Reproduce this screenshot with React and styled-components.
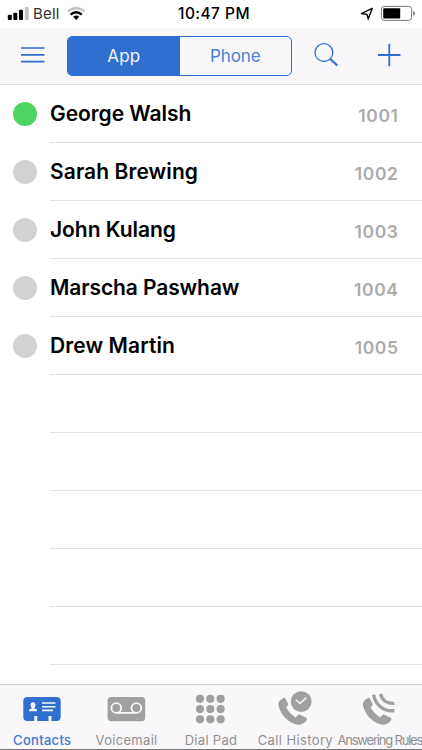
import React from 'react';
import styled, { createGlobalStyle } from 'styled-components';

const BLUE = '#2f6fd0';
const GRAY = '#a0a0a0';

const GlobalStyle = createGlobalStyle`
  * { box-sizing: border-box; }
  body { margin: 0; background: #fff; }
`;

const Screen = styled.div`
  width: 422px;
  height: 750px;
  overflow: hidden;
  display: flex;
  flex-direction: column;
  background: #fff;
  font-family: Inter, Roboto, 'Liberation Sans', sans-serif;
  color: #000;
  border-bottom: 1px solid #77777a;
`;

const StatusBar = styled.div`
  height: 28px;
  flex: none;
  display: grid;
  grid-template-columns: 178px 72px 1fr;
  align-items: center;
`;

const StatusSide = styled.div`
  display: flex;
  align-items: center;
  justify-content: ${(p) => (p.$end ? 'flex-end' : 'flex-start')};
  padding: ${(p) => (p.$end ? '0 6px 0 0' : '0 0 0 7px')};
`;

const Carrier = styled.span`
  width: 28px;
  margin: 0 5px 0 3px;
  font-size: 15px;
  line-height: 28px;
  letter-spacing: 0.2px;
  color: #333;
  white-space: nowrap;
`;

const Clock = styled.span`
  font-size: 15.5px;
  font-weight: 500;
  line-height: 28px;
  letter-spacing: 0.45px;
  white-space: nowrap;
`;

const Icon = styled.svg`
  display: block;
  flex: none;
`;

const NavBar = styled.div`
  height: 57px;
  flex: none;
  display: flex;
  align-items: center;
  padding: 0 18px 0 17px;
  background: #f9f7f9;
  border-bottom: 1px solid #dcdbdd;
`;

const IconButton = styled.button`
  width: 32px;
  height: 32px;
  padding: 0;
  border: 0;
  background: none;
  color: ${BLUE};
  margin-left: ${(p) => p.$gap || 0}px;
`;

const Segmented = styled.div`
  width: 225px;
  height: 40px;
  margin: 0 0 0 18px;
  display: flex;
  border: 1px solid ${BLUE};
  border-radius: 5px;
  overflow: hidden;
`;

const Segment = styled.button`
  flex: 1;
  padding: 0;
  border: 0;
  font: 400 17px/38px Inter, Roboto, sans-serif;
  letter-spacing: ${(p) => (p.$active ? 0.1 : -0.1)}px;
  color: ${(p) => (p.$active ? '#f4f7fd' : '#4880d0')};
  background: ${(p) => (p.$active ? BLUE : 'transparent')};
`;

const List = styled.div`
  flex: 1;
  min-height: 0;
  overflow: hidden;
`;

const Row = styled.div`
  height: 58px;
  display: flex;
  padding-left: 13px;
`;

const Presence = styled.span`
  width: 24px;
  height: 24px;
  flex: none;
  margin-top: 16.5px;
  border-radius: 50%;
  background: ${(p) => (p.$online ? '#4cd562' : '#d2d2d2')};
`;

const RowBody = styled.div`
  flex: 1;
  display: flex;
  justify-content: space-between;
  margin-left: ${(p) => (p.$empty ? 37 : 13)}px;
  padding-right: 24px;
  border-bottom: 1px solid #e4e4e5;
`;

const Name = styled.span`
  font-size: 21px;
  font-weight: 600;
  line-height: 57px;
  letter-spacing: ${(p) => p.$track}px;
  white-space: nowrap;
`;

const Extension = styled.span`
  font-size: 17.5px;
  font-weight: 600;
  line-height: 62px;
  height: 57px;
  letter-spacing: 0.6px;
  margin-right: -0.6px;
  color: #ababab;
`;

const TabBar = styled.div`
  height: 65px;
  flex: none;
  display: grid;
  grid-template-columns: repeat(5, 1fr);
  background: #f9f7f9;
  border-top: 1px solid #d0cfd1;
`;

const Tab = styled.div`
  min-width: 0;
  display: flex;
  flex-direction: column;
  align-items: center;
  padding-top: 5px;
  color: ${(p) => (p.$active ? BLUE : GRAY)};
`;

const TabLabel = styled.span`
  margin-top: 2px;
  font-size: 13px;
  font-weight: ${(p) => (p.$active ? 500 : 400)};
  line-height: 16px;
  letter-spacing: ${(p) => p.$track}px;
  white-space: nowrap;
  color: ${(p) => (p.$active ? '#3f78cf' : '#909090')};
`;

const HANDSET =
  'M5 10.7 C2.8 12.2 1.8 14.4 2.7 17.4 C5.4 26.4 11.6 32.8 20.6 35.5 C24.4 36.5 28.2 34.8 30.7 31 C31.2 30.2 31 29.3 30.2 28.8 L24 25.7 C23.1 25.3 22.3 25.5 21.6 26.2 L19.6 28.4 C15.6 26 12.2 22.4 10.2 18.3 L11.8 16.4 C12.3 15.8 12.3 15.1 12 14.4 L9.3 9.5 C8.9 8.8 8.2 8.7 7.5 9.1 Z';

const contacts = [
  { name: 'George Walsh', ext: '1001', online: true, track: -0.05 },
  { name: 'Sarah Brewing', ext: '1002', track: 0.08 },
  { name: 'John Kulang', ext: '1003', track: -0.05 },
  { name: 'Marscha Paswhaw', ext: '1004', track: -0.1 },
  { name: 'Drew Martin', ext: '1005', track: 0.1 },
];

const ContactsIcon = () => (
  <Icon width="40" height="40" viewBox="0 0 40 40">
    <path
      fill="currentColor"
      d="M5.5 7 H34.5 Q38.7 7 38.7 11.2 V26.8 Q38.7 31 34.5 31 H29.5 V26 H26.5 V31 H15.3 V26 H12.3 V31 H5.5 Q1.3 31 1.3 26.8 V11.2 Q1.3 7 5.5 7 Z"
    />
    <g fill="#f4f6fc">
      <ellipse cx="11" cy="15.3" rx="2.4" ry="3" />
      <path d="M10 17 H12 V18.2 L15 19.6 V21.2 H7 V19.6 L10 18.2 Z" />
      <path d="M20 12.2 H33.5 V13.8 H20 Z M20 16 H33.5 V17.6 H20 Z M20 19.6 H31 V21.2 H20 Z" />
    </g>
  </Icon>
);

const VoicemailIcon = () => (
  <Icon width="40" height="40" viewBox="0 0 40 40">
    <rect x="0.6" y="7" width="37.6" height="24.2" rx="3.6" fill="currentColor" />
    <g fill="none" stroke="#f9f7f9" strokeWidth="1.8">
      <circle cx="9.3" cy="18" r="4.9" />
      <circle cx="29.4" cy="18" r="4.9" />
      <path d="M9.3 22.9 H29.4" />
    </g>
  </Icon>
);

const DialPadIcon = () => (
  <Icon width="40" height="40" viewBox="0 0 40 40" fill="currentColor">
    {[8.8, 19.1, 29.3].map((y) =>
      [9, 19.3, 29.6].map((x) => <circle key={`${x}-${y}`} cx={x} cy={y} r="4.1" />)
    )}
  </Icon>
);

const HistoryIcon = () => (
  <Icon width="40" height="40" viewBox="0 0 40 40">
    <path d={HANDSET} transform="translate(1 -1)" fill="currentColor" />
    <circle cx="26.2" cy="11.6" r="11.3" fill="#f9f7f9" />
    <circle cx="26.2" cy="11.6" r="10.4" fill="currentColor" />
    <path d="M20.7 9.7 L25.1 13.4 L31.4 7.6" fill="none" stroke="#f4f4f4" strokeWidth="1.5" />
  </Icon>
);

const RulesIcon = () => (
  <Icon width="40" height="40" viewBox="0 0 40 40">
    <path d={HANDSET} transform="translate(0.5 -1)" fill="currentColor" />
    <g fill="none" stroke="currentColor" strokeWidth="3.3">
      <path d="M13.6 4.8 C14.9 13.8 23.4 22.2 34.4 20.5" />
      <path d="M20.6 3.8 C22.1 10.1 27.3 14 34.4 13.3" />
    </g>
  </Icon>
);

const tabs = [
  { label: 'Contacts', icon: ContactsIcon, active: true, track: 0.3 },
  { label: 'Voicemail', icon: VoicemailIcon, track: 0.3 },
  { label: 'Dial Pad', icon: DialPadIcon, track: 0.3 },
  { label: 'Call History', icon: HistoryIcon, track: 0.38 },
  { label: 'Answering Rules', icon: RulesIcon, track: -1.2 },
];

export default function App() {
  return (
    <>
      <GlobalStyle />
      <Screen>
        <StatusBar>
          <StatusSide>
            <Icon width="23" height="28" viewBox="0 0 23 28">
              <rect x="0.8" y="14.7" width="4" height="5.3" rx="1" />
              <rect x="6.3" y="12.7" width="4" height="7.3" rx="1" />
              <rect x="12" y="9.8" width="4" height="10.2" rx="1" />
              <rect x="17.8" y="7" width="4" height="13" rx="1" fill="#c4c4c4" />
            </Icon>
            <Carrier>Bell</Carrier>
            <Icon width="20" height="28" viewBox="0 0 20 28" fill="none" strokeWidth="2.5">
              <path d="M1.9 11.3 Q10.2 4.6 18.5 11.3" stroke="#c2c2c2" />
              <path d="M4.6 14.5 Q10.2 10 15.8 14.5" stroke="#000" />
              <path d="M7.2 16.8 Q10.2 14.4 13.2 16.8 L10.2 19.9 Z" fill="#000" />
            </Icon>
          </StatusSide>
          <Clock>10:47 PM</Clock>
          <StatusSide $end>
            <Icon width="14" height="28" viewBox="0 0 14 28">
              <path
                d="M1.4 13.6 L12.2 8.4 L8.2 19 L7 14.4 Z"
                fill="none"
                stroke="#111"
                strokeWidth="1.5"
                strokeLinejoin="round"
              />
            </Icon>
            <Icon width="42" height="28" viewBox="0 0 42 28">
              <rect x="7.4" y="6.4" width="30.2" height="14" rx="3" fill="none" stroke="#777" />
              <rect x="9.2" y="8.2" width="17" height="10.3" rx="1" />
              <path d="M39.2 10.8 Q42.8 13.4 39.2 16 Z" fill="#777" />
            </Icon>
          </StatusSide>
        </StatusBar>

        <NavBar>
          <IconButton aria-label="Menu">
            <Icon width="32" height="32" viewBox="0 0 32 32" stroke="currentColor" strokeWidth="1.7">
              <path d="M4 8 H27.5 M4 14.9 H27.5 M4 21.6 H27.5" />
            </Icon>
          </IconButton>
          <Segmented>
            <Segment $active>App</Segment>
            <Segment>Phone</Segment>
          </Segmented>
          <IconButton aria-label="Search" $gap={18}>
            <Icon width="32" height="32" viewBox="0 0 32 32" fill="none" stroke="currentColor">
              <circle cx="13.9" cy="12.6" r="8.9" strokeWidth="1.3" />
              <path d="M20 18.8 L27.3 25.5" strokeWidth="2.2" />
            </Icon>
          </IconButton>
          <IconButton aria-label="Add contact" $gap={30}>
            <Icon width="32" height="32" viewBox="0 0 32 32" stroke="currentColor" strokeWidth="1.8">
              <path d="M6 15 H28.5 M17.3 3.8 V26.2" />
            </Icon>
          </IconButton>
        </NavBar>

        <List>
          {contacts.map((c) => (
            <Row key={c.ext}>
              <Presence $online={c.online} />
              <RowBody>
                <Name $track={c.track}>{c.name}</Name>
                <Extension>{c.ext}</Extension>
              </RowBody>
            </Row>
          ))}
          {[0, 1, 2, 3, 4].map((i) => (
            <Row key={i}>
              <RowBody $empty />
            </Row>
          ))}
        </List>

        <TabBar>
          {tabs.map(({ label, icon: TabIcon, active, track }) => (
            <Tab key={label} $active={active}>
              <TabIcon />
              <TabLabel $active={active} $track={track}>
                {label}
              </TabLabel>
            </Tab>
          ))}
        </TabBar>
      </Screen>
    </>
  );
}
